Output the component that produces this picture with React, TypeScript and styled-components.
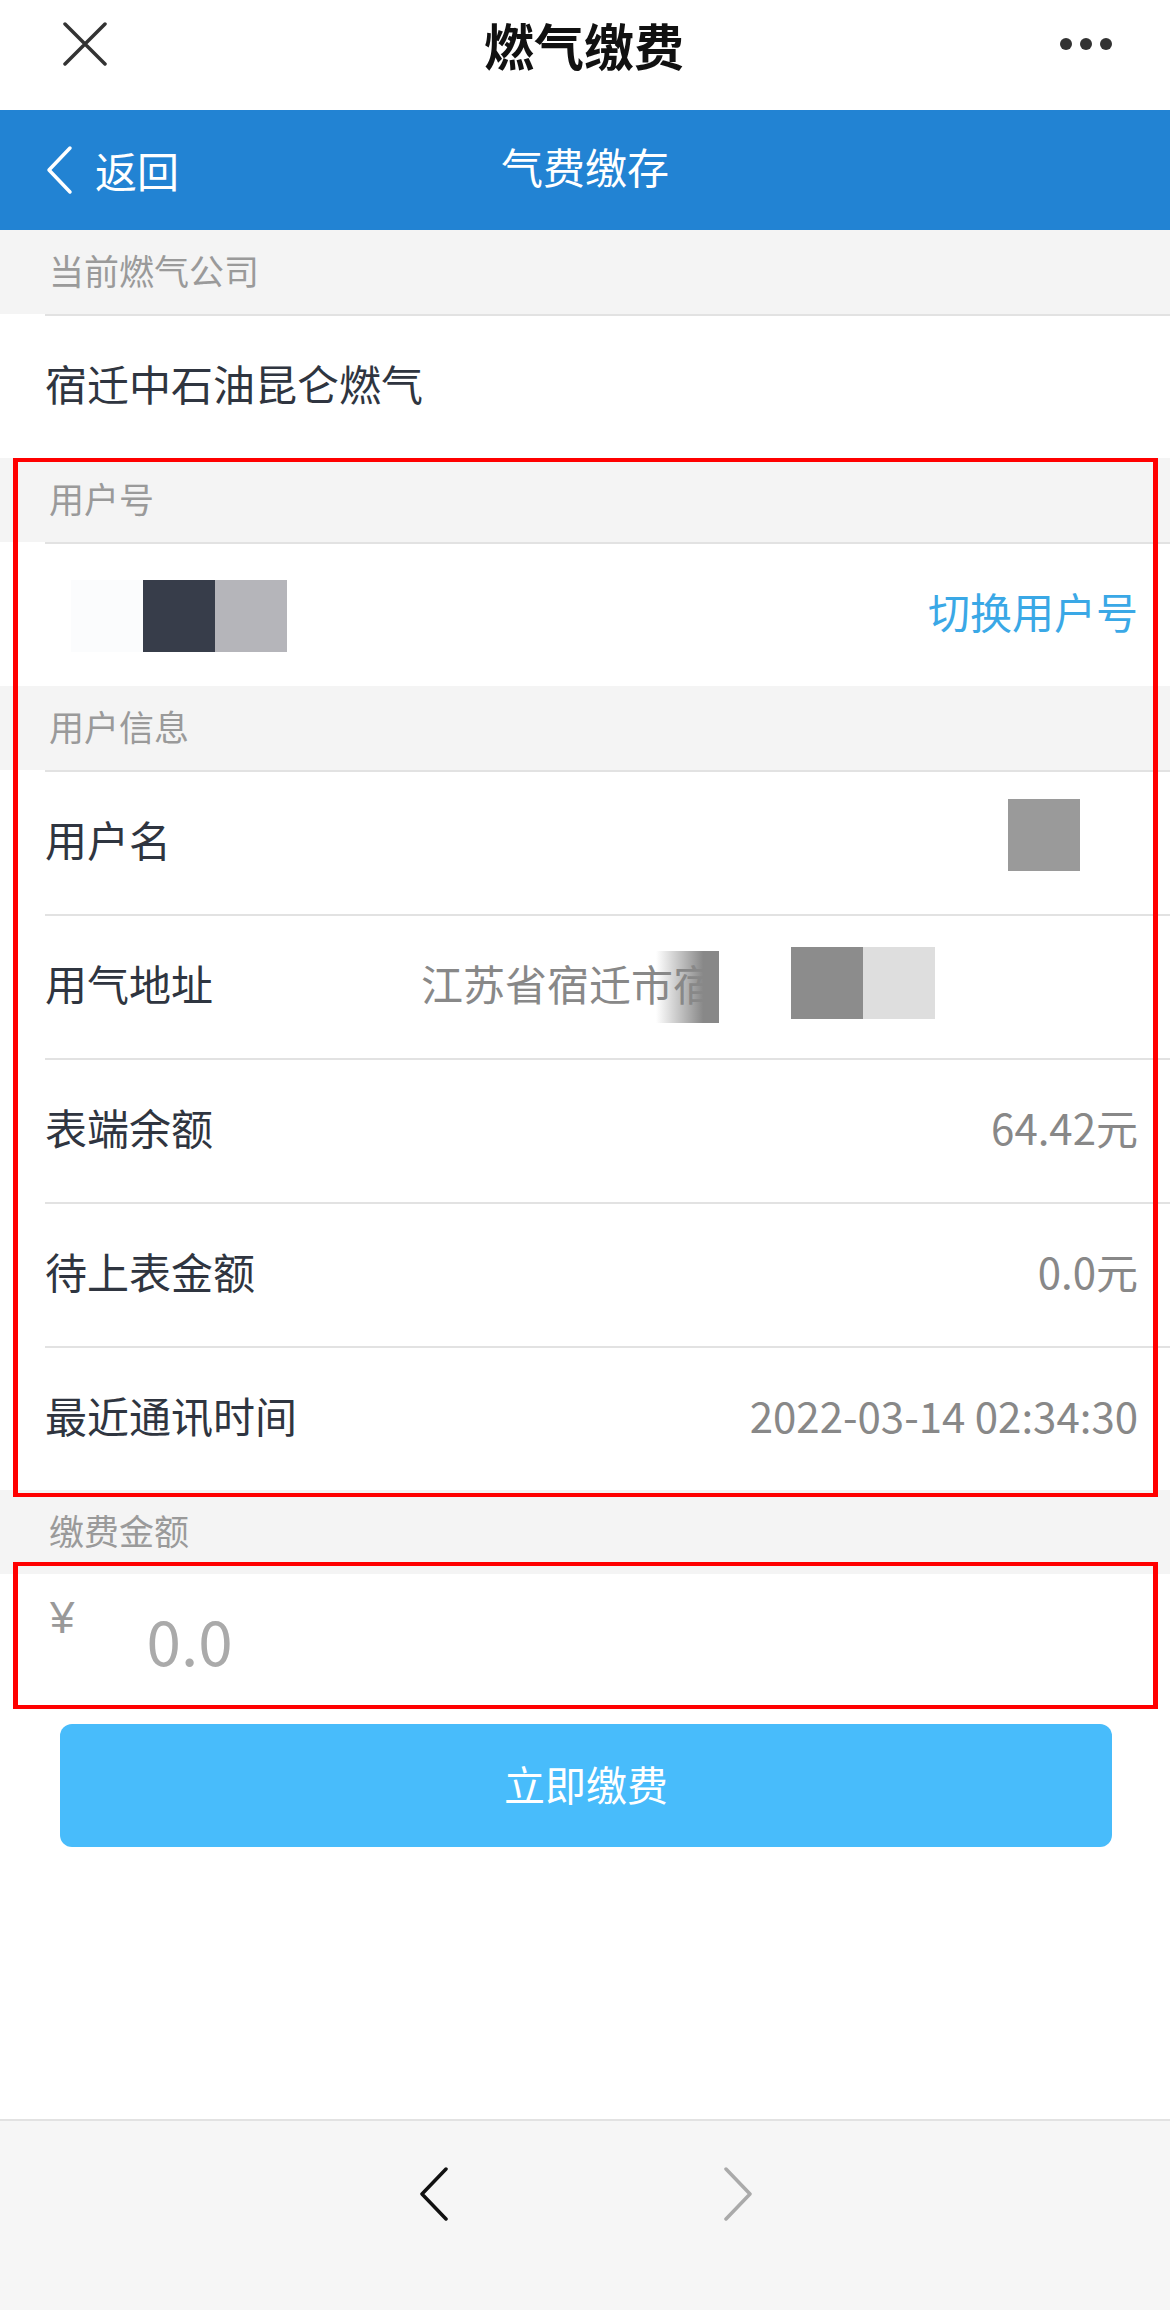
import React from 'react';
import styled, { createGlobalStyle } from 'styled-components';

const GlobalStyle = createGlobalStyle`
  html, body {
    margin: 0;
    padding: 0;
    background: #ffffff;
  }
  body {
    font-family: "Noto Sans CJK SC", "Noto Sans", sans-serif;
  }
`;

type InfoItem = { label: string; value: string };

const infoRows: InfoItem[] = [
  { label: '表端余额', value: '64.42元' },
  { label: '待上表金额', value: '0.0元' },
  { label: '最近通讯时间', value: '2022-03-14 02:34:30' },
];

function App() {
  return (
    <>
      <GlobalStyle />
      <Page>
        <TopBar>
          <IconSlot>
            <svg width="44" height="44" viewBox="0 0 44 44">
              <path d="M2 2 L42 42 M42 2 L2 42" stroke="#333" strokeWidth="3.5" strokeLinecap="round" />
            </svg>
          </IconSlot>
          <TopTitle>燃气缴费</TopTitle>
          <IconSlot $right>
            <svg width="54" height="14" viewBox="0 0 54 14">
              <circle cx="7" cy="7" r="6" fill="#333" />
              <circle cx="27" cy="7" r="6" fill="#333" />
              <circle cx="47" cy="7" r="6" fill="#333" />
            </svg>
          </IconSlot>
        </TopBar>

        <NavBar>
          <BackLink>
            <svg width="28" height="50" viewBox="0 0 28 50">
              <polyline points="25,3 4,25 25,47" fill="none" stroke="#fff" strokeWidth="3.5" strokeLinecap="round" strokeLinejoin="round" />
            </svg>
            返回
          </BackLink>
          <NavTitle>气费缴存</NavTitle>
          <span />
        </NavBar>

        <Content>
          <SectionHeader>当前燃气公司</SectionHeader>
          <Row>
            <Label>宿迁中石油昆仑燃气</Label>
          </Row>

          <Marked $top={0} $bottom={-7}>
            <SectionHeader>用户号</SectionHeader>
            <Row>
              <MaskGroup>
                <MaskBlock $color="#fbfcfd" />
                <MaskBlock $color="#373d4a" />
                <MaskBlock $color="#b5b5ba" />
              </MaskGroup>
              <SwitchLink>切换用户号</SwitchLink>
            </Row>

            <SectionHeader>用户信息</SectionHeader>
            <Row>
              <Label>用户名</Label>
              <MaskBlock $color="#9a9a9a" $shift={-4} style={{ marginRight: 58 }} />
            </Row>
            <Row>
              <Label>用气地址</Label>
              <AddressGroup>
                <Value>江苏省宿迁市宿</Value>
                <FadeBlock />
                <MaskBlock $color="#8c8c8c" style={{ marginLeft: 72 }} />
                <MaskBlock $color="#dedede" />
              </AddressGroup>
            </Row>
            {infoRows.map(item => (
              <Row key={item.label}>
                <Label>{item.label}</Label>
                <Value>{item.value}</Value>
              </Row>
            ))}
          </Marked>

          <SectionHeader>缴费金额</SectionHeader>
          <Marked $top={-12} $bottom={-1}>
            <AmountRow>
              <Currency>¥</Currency>
              <AmountInput>0.0</AmountInput>
            </AmountRow>
          </Marked>

          <PayButton>立即缴费</PayButton>
        </Content>

        <BottomBar>
          <svg width="30" height="54" viewBox="0 0 30 54">
            <polyline points="27,2 3,27 27,52" fill="none" stroke="#111" strokeWidth="3.5" strokeLinecap="round" strokeLinejoin="round" />
          </svg>
          <svg width="30" height="54" viewBox="0 0 30 54">
            <polyline points="3,2 27,27 3,52" fill="none" stroke="#aaa" strokeWidth="3.5" strokeLinecap="round" strokeLinejoin="round" />
          </svg>
        </BottomBar>
      </Page>
    </>
  );
}

export default App;

const Page = styled.div`
  width: 1170px;
  min-height: 2310px;
  display: flex;
  flex-direction: column;
  background: #ffffff;
`;

const TopBar = styled.div`
  height: 110px;
  box-sizing: border-box;
  padding: 0 57px 22px 63px;
  display: grid;
  grid-template-columns: 1fr auto 1fr;
  align-items: center;
`;

const IconSlot = styled.div<{ $right?: boolean }>`
  display: flex;
  justify-content: ${p => (p.$right ? 'flex-end' : 'flex-start')};
  align-items: center;
`;

const TopTitle = styled.div`
  font-size: 50px;
  font-weight: 700;
  color: #111;
  line-height: 1;
  transform: translateX(-4px);
`;

const NavBar = styled.div`
  height: 120px;
  background: #2283d3;
  display: grid;
  grid-template-columns: 1fr auto 1fr;
  align-items: center;
  padding-left: 45px;
  padding-right: 45px;
`;

const BackLink = styled.div`
  display: flex;
  align-items: center;
  gap: 22px;
  color: #fff;
  font-size: 42px;
  line-height: 1;
`;

const NavTitle = styled.div`
  color: #fff;
  font-size: 42px;
  line-height: 1;
  margin-top: -8px;
`;

const Content = styled.div`
  flex: 1;
  display: flex;
  flex-direction: column;
`;

const SectionHeader = styled.div`
  height: 84px;
  box-sizing: border-box;
  background: #f4f4f4;
  padding-left: 49px;
  padding-bottom: 5px;
  display: flex;
  align-items: center;
  font-size: 35px;
  color: #9a9a9a;
  line-height: 1;
`;

const Row = styled.div`
  height: 144px;
  box-sizing: border-box;
  margin-left: 45px;
  padding-right: 32px;
  padding-bottom: 8px;
  border-top: 2px solid #e2e2e2;
  display: flex;
  align-items: center;
  justify-content: space-between;
`;

const Label = styled.div`
  font-size: 42px;
  color: #2f3540;
  line-height: 1;
  white-space: nowrap;
`;

const Value = styled.div`
  font-size: 42px;
  color: #888;
  line-height: 1;
  white-space: nowrap;
`;

const SwitchLink = styled.div`
  font-size: 42px;
  color: #3aa8e6;
  line-height: 1;
`;

const MaskGroup = styled.div`
  display: flex;
  margin-left: 26px;
  margin-top: 10px;
`;

const MaskBlock = styled.div<{ $color: string; $shift?: number }>`
  width: 72px;
  height: 72px;
  flex: none;
  background: ${p => p.$color};
  transform: translateY(${p => p.$shift ?? 0}px);
`;

const AddressGroup = styled.div`
  display: flex;
  align-items: center;
  margin-left: 208px;
  flex: 1;
`;

const FadeBlock = styled.div`
  width: 63px;
  height: 72px;
  flex: none;
  margin-left: -59px;
  transform: translateY(4px);
  background: linear-gradient(to right, rgba(136, 136, 136, 0), #888 75%);
`;

const Marked = styled.div<{ $top: number; $bottom: number }>`
  position: relative;
  &::after {
    content: "";
    position: absolute;
    left: 13px;
    right: 12px;
    top: ${p => p.$top}px;
    bottom: ${p => p.$bottom}px;
    border: 4px solid #ff0000;
    border-left-width: 5px;
    border-right-width: 5px;
    pointer-events: none;
  }
`;

const AmountRow = styled.div`
  height: 134px;
  display: flex;
  align-items: flex-start;
  padding-left: 50px;
`;

const Currency = styled.div`
  font-family: "Liberation Sans", sans-serif;
  font-size: 44px;
  color: #999;
  line-height: 1;
  margin-top: 22px;
`;

const AmountInput = styled.div`
  font-size: 62px;
  color: #aaa;
  line-height: 1;
  margin-left: 72px;
  margin-top: 34px;
`;

const PayButton = styled.button`
  margin: 16px 58px 0 60px;
  height: 123px;
  border: none;
  border-radius: 12px;
  background: #48bcfb;
  color: #fff;
  font-family: inherit;
  font-size: 41px;
  line-height: 1;
  padding-bottom: 6px;
`;

const BottomBar = styled.div`
  height: 191px;
  box-sizing: border-box;
  border-top: 2px solid #e2e2e2;
  background: #f6f6f6;
  display: flex;
  justify-content: center;
  align-items: flex-start;
  gap: 274px;
  padding-top: 46px;
  padding-left: 2px;
`;
